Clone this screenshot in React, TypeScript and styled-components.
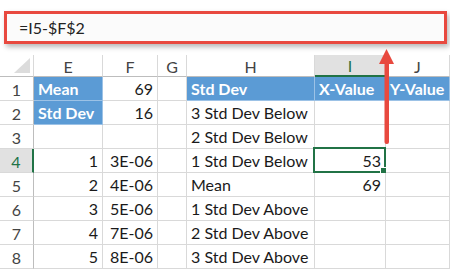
import React from "react";
import styled, { createGlobalStyle } from "styled-components";

const Global = createGlobalStyle`
  html, body { margin: 0; padding: 0; background: #ffffff; }
  body { width: 450px; height: 270px; overflow: hidden; font-family: Lato, "Liberation Sans", sans-serif; }
`;

const Page = styled.div`
  position: relative;
  width: 450px;
  height: 270px;
  overflow: hidden;
  background: #ffffff;
`;

const FormulaWrap = styled.div`
  padding: 11px 3px 0 4px;
  height: 44px;
  box-sizing: border-box;
`;

const FormulaBox = styled.div`
  height: 33px;
  box-sizing: border-box;
  border: 3px solid #e8493f;
  background: #fbfbfb;
  box-shadow: 2px 3px 5px rgba(0, 0, 0, 0.28);
  display: flex;
  align-items: center;
  padding-left: 12px;
  font-size: 16px;
  color: #222222;
`;

const Grid = styled.div`
  margin-top: 11px;
  display: grid;
  grid-template-columns: 34px 69px 55px 29px 128px 71px 1fr;
  grid-auto-rows: 24px;
  grid-template-rows: 22px;
  font-size: 16px;
`;

const HeadCell = styled.div<{ $sel?: boolean }>`
  position: relative;
  box-sizing: border-box;
  border-right: 1px solid #d9d9d9;
  border-bottom: ${(p) => (p.$sel ? "2px solid #217346" : "1px solid #bdbdbd")};
  background: ${(p) => (p.$sel ? "#e1e1e1" : "#ffffff")};
  color: ${(p) => (p.$sel ? "#217346" : "#444444")};
  display: flex;
  align-items: center;
  justify-content: center;
  font-size: 16px;
  padding-top: 1px;
`;

const Corner = styled.div`
  position: relative;
  box-sizing: border-box;
  border-right: 1px solid #d9d9d9;
  border-bottom: 1px solid #bdbdbd;
  background: #ffffff;
`;

const Triangle = styled.div`
  position: absolute;
  right: 3px;
  bottom: 3px;
  width: 0;
  height: 0;
  border-left: 16px solid transparent;
  border-bottom: 15px solid #dcdcdc;
`;

const RowHead = styled.div<{ $sel?: boolean }>`
  box-sizing: border-box;
  border-right: ${(p) => (p.$sel ? "2px solid #217346" : "1px solid #bdbdbd")};
  border-bottom: 1px solid #d9d9d9;
  background: ${(p) => (p.$sel ? "#e1e1e1" : "#ffffff")};
  color: ${(p) => (p.$sel ? "#217346" : "#444444")};
  display: flex;
  align-items: center;
  justify-content: center;
  font-size: 16px;
  padding-top: 1px;
`;

const Cell = styled.div<{ $blue?: boolean; $num?: boolean }>`
  position: relative;
  box-sizing: border-box;
  border-right: 1px solid ${(p) => (p.$blue ? "#9cc2e6" : "#d9d9d9")};
  border-bottom: 1px solid ${(p) => (p.$blue ? "#9cc2e6" : "#d9d9d9")};
  background: ${(p) => (p.$blue ? "#5b9bd5" : "#ffffff")};
  color: ${(p) => (p.$blue ? "#ffffff" : "#1a1a1a")};
  font-weight: ${(p) => (p.$blue ? 700 : 400)};
  display: flex;
  align-items: flex-end;
  justify-content: ${(p) => (p.$num ? "flex-end" : "flex-start")};
  padding: 0 4px 1px 4px;
  white-space: nowrap;
  overflow: visible;
  line-height: 21px;
`;

const Selection = styled.div`
  position: absolute;
  left: -2px;
  top: -2px;
  right: -1px;
  bottom: -1px;
  border: 2px solid #217346;
  pointer-events: none;
`;

const Handle = styled.div`
  position: absolute;
  right: -4px;
  bottom: -4px;
  width: 6px;
  height: 6px;
  background: #217346;
  border: 1px solid #ffffff;
`;

const Arrow = styled.svg`
  position: absolute;
  left: 376px;
  top: 46px;
`;

type CellDef = { t?: string; blue?: boolean; num?: boolean; sel?: boolean };

const rows: CellDef[][] = [
  [{ t: "Mean", blue: true }, { t: "69", num: true }, {}, { t: "Std Dev", blue: true }, { t: "X-Value", blue: true }, { t: "Y-Value", blue: true }],
  [{ t: "Std Dev", blue: true }, { t: "16", num: true }, {}, { t: "3 Std Dev Below" }, {}, {}],
  [{}, {}, {}, { t: "2 Std Dev Below" }, {}, {}],
  [{ t: "1", num: true }, { t: "3E-06", num: true }, {}, { t: "1 Std Dev Below" }, { t: "53", num: true, sel: true }, {}],
  [{ t: "2", num: true }, { t: "4E-06", num: true }, {}, { t: "Mean" }, { t: "69", num: true }, {}],
  [{ t: "3", num: true }, { t: "5E-06", num: true }, {}, { t: "1 Std Dev Above" }, {}, {}],
  [{ t: "4", num: true }, { t: "7E-06", num: true }, {}, { t: "2 Std Dev Above" }, {}, {}],
  [{ t: "5", num: true }, { t: "8E-06", num: true }, {}, { t: "3 Std Dev Above" }, {}, {}],
];

const cols = ["E", "F", "G", "H", "I", "J"];

export default function App() {
  return (
    <Page>
      <Global />
      <FormulaWrap>
        <FormulaBox>=I5-$F$2</FormulaBox>
      </FormulaWrap>
      <Grid>
        <Corner>
          <Triangle />
        </Corner>
        {cols.map((c) => (
          <HeadCell key={c} $sel={c === "I"}>
            {c}
          </HeadCell>
        ))}
        {rows.map((r, i) => (
          <React.Fragment key={i}>
            <RowHead $sel={i === 3}>{i + 1}</RowHead>
            {r.map((c, j) => (
              <Cell key={j} $blue={c.blue} $num={c.num}>
                {c.t}
                {c.sel && (
                  <Selection>
                    <Handle />
                  </Selection>
                )}
              </Cell>
            ))}
          </React.Fragment>
        ))}
      </Grid>
      <Arrow width="22" height="102" viewBox="0 0 22 102">
        <polygon points="10.5,3 3,18 18,18" fill="#e8493f" />
        <rect x="8.5" y="16" width="4.5" height="82" rx="2" fill="#e8493f" />
      </Arrow>
    </Page>
  );
}
